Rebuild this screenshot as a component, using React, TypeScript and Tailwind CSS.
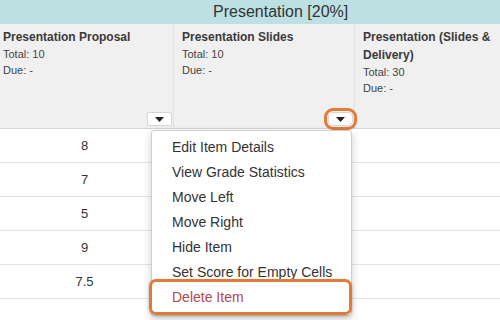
import React from "react";

function Caret() {
  return (
    <svg width="9" height="5" viewBox="0 0 9 5">
      <path d="M0 0 L9 0 L4.5 5 Z" fill="#222" />
    </svg>
  );
}

function HeadCell({
  title,
  total,
  highlight,
  last,
  first,
}: {
  title: string;
  total: string;
  highlight?: boolean;
  last?: boolean;
  first?: boolean;
}) {
  return (
    <div
      className={
        "flex flex-col pt-[4px] pr-[1px] pb-[2px] " +
        (first ? "pl-[3px] " : "pl-[8px] ") +
        (last ? "" : "border-r border-[#e2e2e2]")
      }
    >
      <div className="text-[12px] font-bold leading-[18px] text-[#3a3a3a]">{title}</div>
      <div className="text-[11px] leading-[16px] text-[#444]">Total: {total}</div>
      <div className="text-[11px] leading-[16px] text-[#444]">Due: -</div>
      {!last && (
        <div className="mt-auto self-end">
          <div
            className={
              "w-[25px] h-[14px] bg-white border border-[#d4d4d4] rounded-[2px] flex items-center justify-center " +
              (highlight
                ? "outline outline-[3px] outline-[#e07b39] outline-offset-[1px] rounded-[5px]"
                : "")
            }
          >
            <Caret />
          </div>
        </div>
      )}
    </div>
  );
}

const rows = ["8", "7", "5", "9", "7.5"];
const items = [
  "Edit Item Details",
  "View Grade Statistics",
  "Move Left",
  "Move Right",
  "Hide Item",
  "Set Score for Empty Cells",
];

export default function App() {
  return (
    <div className="relative w-[500px] h-[320px] overflow-hidden bg-white text-[#333] font-['Liberation_Sans',Arial,sans-serif]">
      <div className="h-[24px] bg-[#bde1e3] flex items-center pl-[213px] text-[16px] text-[#333]">
        Presentation [20%]
      </div>
      <div className="grid grid-cols-[174px_181px_145px] h-[105px] bg-[#f0f0f0] border-b border-[#d6d6d6]">
        <HeadCell title="Presentation Proposal" total="10" first />
        <HeadCell title="Presentation Slides" total="10" highlight />
        <HeadCell title="Presentation (Slides & Delivery)" total="30" last />
      </div>
      {rows.map((r) => (
        <div
          key={r}
          className="grid grid-cols-[174px_181px_145px] h-[34px] border-b border-[#e4e4e4]"
        >
          <div className="flex items-center justify-center pr-[5px] text-[13px] text-[#333]">{r}</div>
          <div />
          <div />
        </div>
      ))}

      <div className="absolute left-[151px] top-[130px] w-[201px] bg-white border border-[#cfcfcf] rounded-[3px] shadow-[0_3px_8px_rgba(0,0,0,0.2)] pt-[4px] pb-[5px]">
        {items.map((it) => (
          <div key={it} className="h-[25px] flex items-center pl-[20px] text-[14px] text-[#333] whitespace-nowrap">
            {it}
          </div>
        ))}
        <div className="relative h-[25px] flex items-center pl-[20px] text-[14px] text-[#b5474b]">
          Delete Item
          <div className="absolute left-[-3px] right-[-1px] top-[-6px] bottom-[-5px] border-[3px] border-[#e07b39] rounded-[7px] shadow-[0_1px_3px_rgba(0,0,0,0.25)]" />
        </div>
      </div>
    </div>
  );
}
